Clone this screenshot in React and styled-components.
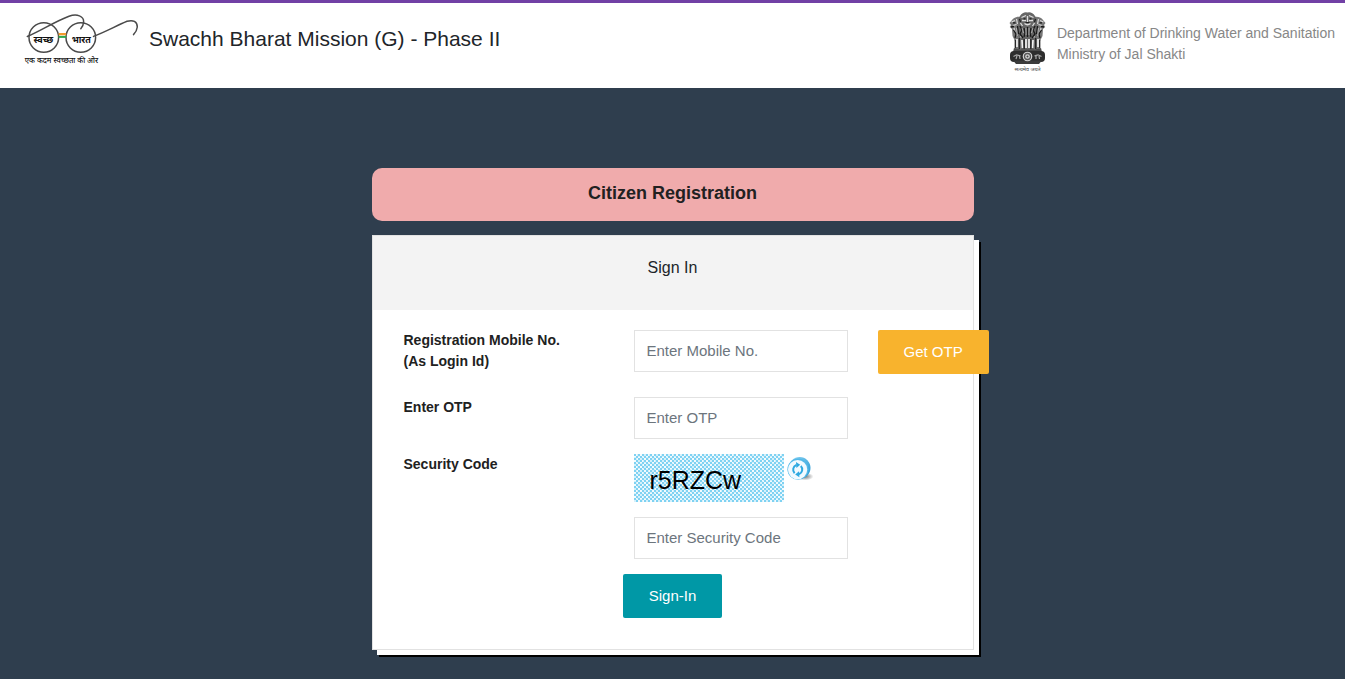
import styled, { createGlobalStyle } from "styled-components";

const GlobalStyles = createGlobalStyle`
  *,
  *::before,
  *::after {
    box-sizing: border-box;
  }

  body {
    margin: 0;
    min-height: 100vh;
    background: #2f3e4e;
    color: #212529;
    font-family: "Liberation Sans", Arial, sans-serif;
    font-size: 14px;
    line-height: 21px;
  }
`;

const Header = styled.header`
  display: flex;
  justify-content: space-between;
  align-items: flex-start;
  min-height: 88px;
  padding: 7px 10px 15px 20px;
  background: #fff;
  border-top: 3px solid #7140a5;
`;

const Brand = styled.a`
  display: flex;
  gap: 9px;
  color: #212529;
  text-decoration: none;
`;

const BrandTitle = styled.h1`
  margin: 14px 0 0;
  font-size: 21px;
  font-weight: 400;
  line-height: 30px;
`;

const Department = styled.div`
  display: flex;
  gap: 10px;
  color: #878787;
`;

const DepartmentName = styled.p`
  margin: 13px 0 0;
`;

const Main = styled.main`
  width: 100%;
  max-width: 602px;
  margin: 0 auto;
  padding: 80px 0 22px;
`;

const PageTitle = styled.h2`
  margin: 0 0 14px;
  padding: 12px 16px 15px;
  background: #f0abac;
  border-radius: 10px;
  color: #212121;
  font-size: 18px;
  line-height: 26px;
  text-align: center;
`;

const Card = styled.section`
  background: #fff;
  border: 1px solid #e2e2e2;
  box-shadow: 5px 5px 0 #fff, 7px 7px 0 #000;
`;

const CardHeader = styled.h3`
  margin: 0;
  padding: 20px 20px 30px;
  background: #f3f3f3;
  font-size: 16px;
  font-weight: 400;
  line-height: 24px;
  text-align: center;
`;

const Form = styled.form`
  display: grid;
  grid-template-columns: minmax(0, 1fr);
  gap: 15px;
  padding: 20px 31px 31px;
`;

const Row = styled.div`
  display: grid;
  grid-template-columns: 200px 214px max-content;
  align-items: start;
  column-gap: 30px;
  padding-bottom: ${(props) => (props.$spaced ? "8px" : "0")};
`;

const Label = styled.label`
  color: #212121;
  font-weight: 700;
`;

const Stack = styled.div`
  display: grid;
  gap: 15px;
`;

const Input = styled.input`
  width: 100%;
  height: 42px;
  padding: 0 12px 2px;
  background: #fff;
  border: 1px solid #e2e2e2;
  border-radius: 0;
  color: #495057;
  font-family: inherit;
  font-size: 15px;

  &::placeholder {
    color: #6c757d;
    opacity: 1;
  }
`;

const Button = styled.button`
  justify-self: center;
  height: 44px;
  padding: 0 26px 2px;
  background: ${(props) => props.$color};
  border: none;
  border-radius: 2px;
  color: #fff;
  font-family: inherit;
  font-size: 15px;
  cursor: pointer;
`;

const CaptchaRow = styled.div`
  display: flex;
  align-items: flex-start;
  gap: 2px;
`;

const Captcha = styled.div`
  width: 150px;
  height: 48px;
  padding: 11px 16px;
  background-color: #fff;
  background-image: radial-gradient(
      circle at 1px 1px,
      #7fd2f2 1px,
      transparent 1px
    ),
    radial-gradient(circle at 3px 3px, #7fd2f2 1px, transparent 1px),
    conic-gradient(#d4f0fb 25%, #f4fbfe 0 50%, #d4f0fb 0 75%, #f4fbfe 0);
  background-size: 4px 4px, 4px 4px, 6px 6px;
  color: #000;
  font-size: 25px;
  line-height: 30px;
`;

const RefreshButton = styled.button`
  width: 28px;
  height: 28px;
  padding: 0;
  background: none;
  border: none;
  cursor: pointer;

  svg {
    display: block;
  }
`;

function GlassesLogo() {
  return (
    <svg width="120" height="60" viewBox="20 10 120 60" aria-hidden="true">
      <g fill="none" stroke="#4a4a4a" strokeWidth="1.5" strokeLinecap="round">
        <circle cx="43.8" cy="37.5" r="14.8" />
        <circle cx="80.8" cy="37.5" r="14.8" />
        <path d="M27.3 36.5 C42 30 56 21 69 16.2 C77 13.5 84 16 83.6 22 Q83.4 26 80.8 28.8" />
        <path d="M93.5 36.4 C105 32 116 26 127 21.3 C133 19.5 137.4 21.5 137.3 27 Q136.8 31.5 133.5 34.6" />
      </g>
      <path d="M58.6 33 H66.2 V35.3 H58.6 Z" fill="#f39a2d" />
      <path d="M58.6 35.9 H66.2 V37.9 H58.6 Z" fill="#2fa84f" />
      <g
        fill="#111"
        fontFamily="'Noto Sans Devanagari', 'Noto Sans', sans-serif"
        fontWeight="700"
        textAnchor="middle"
      >
        <text x="43.3" y="42.5" fontSize="9">
          स्वच्छ
        </text>
        <text x="81.3" y="42.5" fontSize="9">
          भारत
        </text>
        <text x="61.5" y="63" fontSize="7.5" fontWeight="500">
          एक कदम स्वच्छता की ओर
        </text>
      </g>
    </svg>
  );
}

function Emblem() {
  return (
    <svg width="39" height="62" viewBox="0 0 39 62" aria-hidden="true">
      {/* side lions */}
      <path
        d="M13 7 C9 6 5 8 4 10 L1.5 13 L3 15 L1.8 17 L4 19 L4.5 26 L7 31 L7 39 L12 43 L15 30 Z"
        fill="#777"
      />
      <path
        d="M26 7 C30 6 34 8 35 10 L37.5 13 L36 15 L37.2 17 L35 19 L34.5 26 L32 31 L32 39 L27 43 L24 30 Z"
        fill="#777"
      />
      {/* front lion */}
      <path
        d="M12 6 Q15 1.5 19.5 2.5 Q24 1.5 27 6 L29 10 L28.5 17 L29 25 L26.5 31 L26.5 42 H12.5 L12.5 31 L10 25 L10.5 17 L10 10 Z"
        fill="#666"
      />
      <path
        d="M13.5 7.5 L18 5.5 M21 5.5 L25.5 7.5 M14 10.5 L18 10.5 M21 10.5 L25 10.5 M19.5 6 V12 M16.5 13.5 Q19.5 16 22.5 13.5 M12.5 13 L14.5 16 M26.5 13 L24.5 16"
        stroke="#dedede"
        strokeWidth="1.3"
        fill="none"
      />
      <path
        d="M15.5 8.8 H17.5 M21.5 8.8 H23.5 M17.5 12.5 H21.5 M11.5 9 L12.5 12 M27.5 9 L26.5 12"
        stroke="#1c1c1c"
        strokeWidth="1.2"
        fill="none"
      />
      <path
        d="M3.5 12 L7 10.5 M5 15.5 L8.5 14.5 M35.5 12 L32 10.5 M34 15.5 L30.5 14.5 M8.5 9 L9.5 14 M30.5 9 L29.5 14 M6 18 L7 22 M33 18 L32 22"
        stroke="#d8d8d8"
        strokeWidth="1.2"
        fill="none"
      />
      <path
        d="M3 17 L6 16.5 M36 17 L33 16.5 M5 12.9 H7.5 M34 12.9 H31.5 M12 16 L14 20 L12 24 L15 28 M27 16 L25 20 L27 24 L24 28 M16 18 L17 23 L16 27 M23 18 L22 23 L23 27 M19.5 17 V27 M5.5 20 L8 24 L7 28 M33.5 20 L31 24 L32 28 M9.5 16 L10.5 24 M29.5 16 L28.5 24"
        stroke="#191919"
        strokeWidth="1.3"
        fill="none"
      />
      <path
        d="M14 18 L15.5 23 M25 18 L23.5 23 M18 18 V25 M21 18 V25 M8.5 18 L9.3 26 M30.5 18 L29.7 26 M12.5 26 L13 28 M26.5 26 L26 28"
        stroke="#c2c2c2"
        strokeWidth="0.8"
        fill="none"
      />
      <path
        d="M9 29 V37 M14 30 L14.5 38 M18 29 V38 M21 29 V38 M25 30 L24.5 38 M30 29 V37"
        stroke="#f2f2f2"
        strokeWidth="1.7"
        fill="none"
      />
      <path
        d="M11.3 28 V39 M16.2 29 V39 M22.8 29 V39 M27.7 28 V39 M7.3 30 V38 M31.7 30 V38"
        stroke="#222"
        strokeWidth="1.3"
      />
      {/* abacus with the wheel */}
      <path d="M6 38 L12 39.5 H27 L33 38 L34 42 H5 Z" fill="#4a4a4a" />
      <rect x="2" y="41" width="35" height="11" rx="4" fill="#2d2d2d" />
      <path d="M5 50.5 H34 L31 54 H8 Z" fill="#3b3b3b" />
      <circle cx="19.5" cy="46.5" r="4.8" fill="#d5d5d5" />
      <circle cx="19.5" cy="46.5" r="3" fill="none" stroke="#555" strokeWidth="1.3" />
      <circle cx="19.5" cy="46.5" r="1" fill="#444" />
      <path
        d="M5.5 46.5 L8.5 44.8 L12.5 45.8 M8 49 L9 46 M12 49 L11.5 46 M26.5 45.8 L30 44.8 L33.5 46.5 M28 49 V46 M31.5 49 L31 46"
        stroke="#a8a8a8"
        strokeWidth="1.2"
        fill="none"
      />
      <text
        x="19.5"
        y="61"
        fill="#444"
        fontFamily="'Noto Sans Devanagari', 'Noto Sans', sans-serif"
        fontSize="5.4"
        textAnchor="middle"
      >
        सत्यमेव जयते
      </text>
    </svg>
  );
}

function RefreshIcon() {
  return (
    <svg width="28" height="28" viewBox="0 0 28 28" aria-hidden="true">
      <defs>
        <linearGradient id="disc" x1="0" y1="0" x2="1" y2="1">
          <stop offset="0" stopColor="#8fd6f5" />
          <stop offset="1" stopColor="#2396d2" />
        </linearGradient>
        <radialGradient id="shade">
          <stop offset="0" stopColor="#777" />
          <stop offset="1" stopColor="#777" stopOpacity="0" />
        </radialGradient>
      </defs>
      <ellipse cx="19" cy="22.5" rx="8.5" ry="4" fill="url(#shade)" />
      <circle cx="13.7" cy="13.8" r="10.8" fill="url(#disc)" />
      <circle cx="12" cy="15.2" r="10.6" fill="#54b9e8" />
      <circle cx="11.6" cy="15.6" r="9.6" fill="#f2faff" />
      {/* two arrows chasing each other */}
      <g fill="none" stroke="#2fa9e1" strokeWidth="2">
        <path d="M8.6 19.2 A5 5 0 0 1 10.4 11" />
        <path d="M14.8 12 A5 5 0 0 1 13 20.2" />
      </g>
      <path d="M10 8 L14.2 10.8 L10.4 14 Z" fill="#2fa9e1" />
      <path d="M13.4 23.2 L9.2 20.4 L13 17.2 Z" fill="#2fa9e1" />
    </svg>
  );
}

function App() {
  return (
    <>
      <GlobalStyles />
      <Header>
        <Brand href="#">
          <GlassesLogo />
          <BrandTitle>Swachh Bharat Mission (G) - Phase II</BrandTitle>
        </Brand>
        <Department>
          <Emblem />
          <DepartmentName>
            Department of Drinking Water and Sanitation
            <br />
            Ministry of Jal Shakti
          </DepartmentName>
        </Department>
      </Header>

      <Main>
        <PageTitle>Citizen Registration</PageTitle>
        <Card>
          <CardHeader>Sign In</CardHeader>
          <Form onSubmit={(e) => e.preventDefault()}>
            <Row $spaced>
              <Label htmlFor="mobile">
                Registration Mobile No.
                <br />
                (As Login Id)
              </Label>
              <Input id="mobile" type="tel" placeholder="Enter Mobile No." />
              <Button type="button" $color="#f8b32d">
                Get OTP
              </Button>
            </Row>
            <Row>
              <Label htmlFor="otp">Enter OTP</Label>
              <Input id="otp" type="text" placeholder="Enter OTP" />
            </Row>
            <Row>
              <Label htmlFor="code">Security Code</Label>
              <Stack>
                <CaptchaRow>
                  <Captcha>r5RZCw</Captcha>
                  <RefreshButton type="button" aria-label="Refresh">
                    <RefreshIcon />
                  </RefreshButton>
                </CaptchaRow>
                <Input id="code" type="text" placeholder="Enter Security Code" />
              </Stack>
            </Row>
            <Button type="submit" $color="#0098a6">
              Sign-In
            </Button>
          </Form>
        </Card>
      </Main>
    </>
  );
}

export default App;
